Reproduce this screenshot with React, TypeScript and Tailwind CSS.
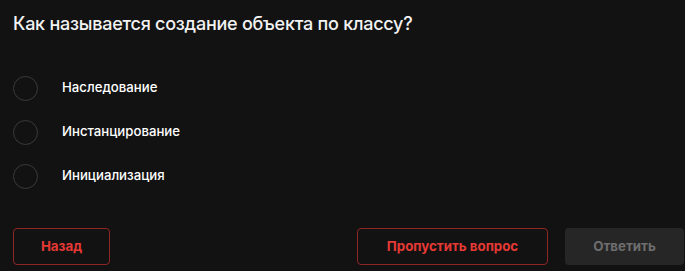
import React, { useState } from 'react';

// варианты ответа
const options = ['Наследование', 'Инстанцирование', 'Инициализация'];

const App: React.FC = () => {
    const [selected, setSelected] = useState<number | null>(null);

    return (
        <div
            className="w-[685px] h-[271px] bg-[#121212] flex flex-col pl-[13px] pr-[1px] overflow-hidden"
            style={{ fontFamily: 'Inter, "Noto Sans", sans-serif' }}
        >
            {/* вопрос */}
            <h2 className="mt-[12px] h-[24px] leading-[24px] text-[18px] font-medium text-[#f2f2f2] tracking-[-0.25px]">
                Как называется создание объекта по классу?
            </h2>

            {/* варианты */}
            <div className="mt-[30px] flex flex-col">
                {options.map((opt, i) => (
                    <label key={opt} className="h-[44px] flex items-center cursor-pointer" onClick={() => setSelected(i)}>
                        <span
                            className={`w-[25px] h-[25px] rounded-full border-[1.5px] ${
                                selected === i ? 'border-[#e53935]' : 'border-[#3a3a3a]'
                            }`}
                        />
                        <span className="ml-[24px] text-[13.2px] font-medium text-white">{opt}</span>
                    </label>
                ))}
            </div>

            {/* кнопки */}
            <div className="mt-[30px] flex items-center">
                <button className="w-[97px] h-[37px] rounded-[4px] border border-[#8f2626] text-[13.3px] font-bold text-[#e53935]">
                    Назад
                </button>
                <div className="ml-auto flex gap-[17px]">
                    <button className="w-[191px] h-[37px] rounded-[4px] border border-[#8f2626] text-[13.3px] font-bold text-[#e53935]">
                        Пропустить вопрос
                    </button>
                    <button
                        disabled={selected === null}
                        className="w-[119px] h-[37px] rounded-[4px] bg-[#262626] text-[13.3px] font-bold text-[#6e6e6e]"
                    >
                        Ответить
                    </button>
                </div>
            </div>
        </div>
    );
};

export default App;
